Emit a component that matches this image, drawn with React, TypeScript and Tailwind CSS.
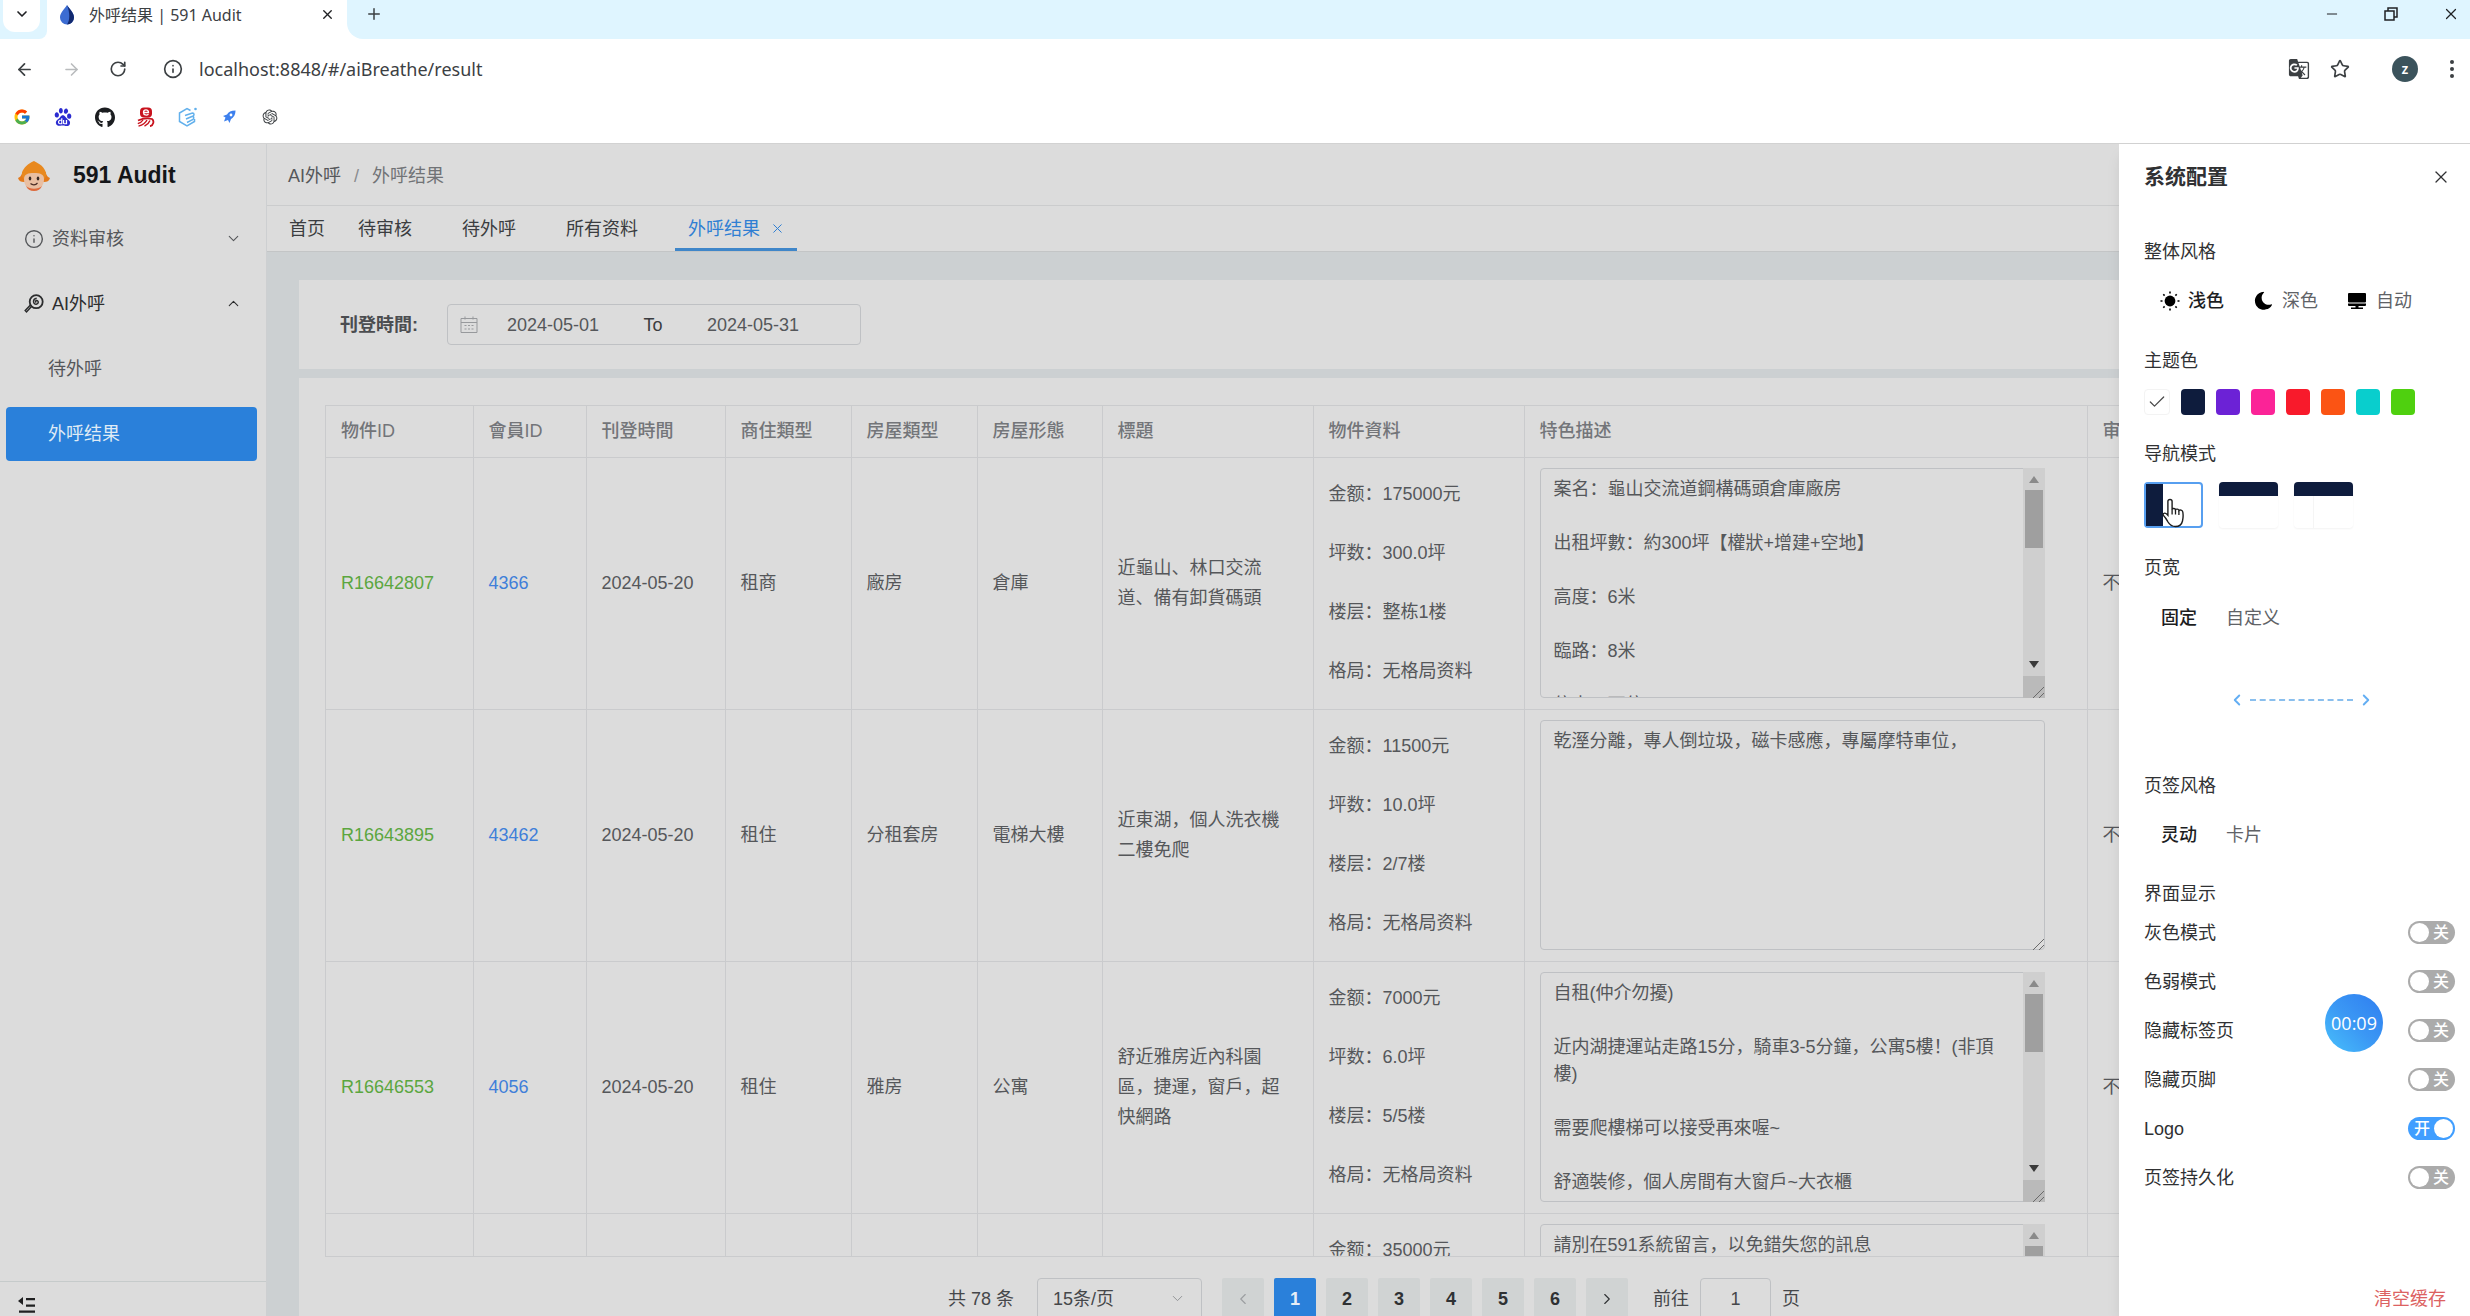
import { useState } from "react";
import clsx from "clsx";
import {
  ArrowLeft,
  ArrowRight,
  Check,
  ChevronDown,
  ChevronLeft,
  ChevronRight,
  ChevronUp,
  Info,
  Minus,
  Plus,
  RotateCw,
  Star,
  X,
} from "lucide-react";
import { FaGithub, FaMoon } from "react-icons/fa";
import { FcGoogle } from "react-icons/fc";
import { MdGTranslate } from "react-icons/md";
import { RiOpenaiFill } from "react-icons/ri";
import { SiBaidu } from "react-icons/si";

/* ---------------------------------- data --------------------------------- */

const tabs = ["首页", "待审核", "待外呼", "所有资料", "外呼结果"];

const columns = [
  "物件ID",
  "會員ID",
  "刊登時間",
  "商住類型",
  "房屋類型",
  "房屋形態",
  "標題",
  "物件資料",
  "特色描述",
  "审核",
];

interface Listing {
  id: string;
  member: string;
  date: string;
  usage: string;
  kind: string;
  shape: string;
  title: string;
  info: string[];
  description: string;
  scroll?: boolean;
}

const listings: Listing[] = [
  {
    id: "R16642807",
    member: "4366",
    date: "2024-05-20",
    usage: "租商",
    kind: "廠房",
    shape: "倉庫",
    title: "近龜山、林口交流道、備有卸貨碼頭",
    info: ["金额：175000元", "坪数：300.0坪", "楼层：整栋1楼", "格局：无格局资料"],
    description:
      "案名：龜山交流道鋼構碼頭倉庫廠房\n\n出租坪數：約300坪【權狀+增建+空地】\n\n高度：6米\n\n臨路：8米\n\n停車：可停",
    scroll: true,
  },
  {
    id: "R16643895",
    member: "43462",
    date: "2024-05-20",
    usage: "租住",
    kind: "分租套房",
    shape: "電梯大樓",
    title: "近東湖，個人洗衣機二樓免爬",
    info: ["金额：11500元", "坪数：10.0坪", "楼层：2/7楼", "格局：无格局资料"],
    description: "乾溼分離，專人倒垃圾，磁卡感應，專屬摩特車位，",
  },
  {
    id: "R16646553",
    member: "4056",
    date: "2024-05-20",
    usage: "租住",
    kind: "雅房",
    shape: "公寓",
    title: "舒近雅房近內科園區，捷運，窗戶，超快網路",
    info: ["金额：7000元", "坪数：6.0坪", "楼层：5/5楼", "格局：无格局资料"],
    description:
      "自租(仲介勿擾)\n\n近内湖捷運站走路15分，騎車3-5分鐘，公寓5樓！(非頂樓)\n\n需要爬樓梯可以接受再來喔~\n\n舒適裝修，個人房間有大窗戶~大衣櫃",
    scroll: true,
  },
  {
    id: "",
    member: "",
    date: "",
    usage: "",
    kind: "",
    shape: "",
    title: "",
    info: ["金额：35000元", "", "", ""],
    description: "請別在591系統留言，以免錯失您的訊息",
    scroll: true,
  },
];

const themeColors = [
  "bg-[#0e1c3d]",
  "bg-[#6c22d6]",
  "bg-[#fb2397]",
  "bg-[#f81a2b]",
  "bg-[#fb5414]",
  "bg-[#09cecd]",
  "bg-[#4fd00f]",
];

const displayOptions = [
  { label: "灰色模式", on: false },
  { label: "色弱模式", on: false },
  { label: "隐藏标签页", on: false },
  { label: "隐藏页脚", on: false },
  { label: "Logo", on: true },
  { label: "页签持久化", on: false },
];

/* ---------------------------------- icons -------------------------------- */

function DropIcon() {
  return (
    <svg width="16" height="20" viewBox="0 0 16 20" aria-hidden="true">
      <path d="M8 0c3 4.500 7 8 7 12.500A7 7 0 0 1 1 12.500C1 8 5 4.500 8 0z" fill="#3c6cd2" />
      <path d="M8 0c3 4.500 7 8 7 12.500A7 7 0 0 1 8 19.500c3-4 3-12 0-19.500z" fill="#12296f" />
    </svg>
  );
}

function SealIcon() {
  return (
    <svg width="18" height="20" viewBox="0 0 18 20" fill="none" stroke="#c8121d" aria-hidden="true">
      <rect x="3" y="0.500" width="12" height="10" rx="4" fill="#c8121d" stroke="none" />
      <path d="M6.500 5.500h5c0-3.500-5-3.500-5 0 0 3 3.500 3 5 1.700" stroke="#fff" strokeWidth="1.300" />
      <path d="M1 13.500c4-1.800 10-2.500 14-1.500 2.500 2 1.500 6.500-2 7.200" strokeWidth="1.800" />
      <path d="M6 13c-1 1.700-3 3-5.200 3.700M10 13c-1.500 3-4.500 5-8.500 6.200M13 13.500c-1 2.500-3 4.500-5.500 5.700" strokeWidth="1.400" />
    </svg>
  );
}

function HexIcon() {
  return (
    <svg width="20" height="20" viewBox="0 0 20 20" fill="none" stroke="#62b0ec" aria-hidden="true">
      <path d="M12.500 3.500 9 1.500 1.500 6v8.500L9 19l7.500-4.500V12" strokeWidth="1.500" />
      <path d="M7 8.500 14.500 6c2 0 2 2.700 0 3.200L8 12M14.500 9.500c2 .5 1.500 2.500 0 3.200L9 15.500" strokeWidth="1.500" />
      <circle cx="17.500" cy="2" r="1.300" fill="#62b0ec" stroke="none" />
    </svg>
  );
}

function RocketIcon() {
  return (
    <svg width="14" height="14" viewBox="0 0 14 14" aria-hidden="true">
      <path d="M13.500.5C9 .5 6.500 2 5 4.500L1 6l2.500 1.500-1.500 4 4-1.500L7.500 13 9 9c2.500-1.500 4.500-4 4.500-8.500z" fill="#3d80ee" />
      <circle cx="9" cy="5" r="1.400" fill="#fff" />
    </svg>
  );
}

function LogoIcon() {
  return (
    <svg width="32" height="30" viewBox="0 0 32 30" aria-hidden="true">
      <path d="M0 17c3-1 3-3 5-6h22c2 3 2 5 5 6-1 3-3 4-6 4H6c-3 0-5-1-6-4z" fill="#e37a1b" />
      <path d="M16 0c3 2 9 3.500 12 11.500.5 3-.5 5-2 7H6c-1.500-2-2.500-4-2-7C5.500 7 10 2.500 16 0z" fill="#e8891f" />
      <path d="M6 18c0-5 4-6 10-6s10 1 10 6c0 7-4 10.500-10 10.500S6 25 6 18z" fill="#e9bfa2" />
      <path d="M8 25c4 3.500 12 3.500 16 0-1.500 3.500-4 5-8 5s-6.500-1.500-8-5z" fill="#dd6a3c" />
      <ellipse cx="12" cy="17.500" rx="1.300" ry="1.900" fill="#3b2b26" />
      <ellipse cx="20" cy="17.500" rx="1.300" ry="1.900" fill="#3b2b26" />
      <path d="M12.500 22.500c2 1.800 5 1.800 7-.5" stroke="#4a2d25" strokeWidth="1.200" fill="none" />
    </svg>
  );
}

function LollipopIcon() {
  return (
    <svg width="20" height="20" viewBox="0 0 20 20" fill="none" stroke="#2c2d2e" aria-hidden="true">
      <circle cx="12.200" cy="7.700" r="6.500" strokeWidth="1.800" />
      <path d="M12.300 8.300c-1-.2-.9-1.700.4-1.700 2 0 2.300 3.300-.4 3.600-3.500.2-4-5.300.4-6" strokeWidth="1.500" />
      <path d="m7.500 12.500-5 5.500-1.300-1.400 5-5.300" strokeWidth="1.500" />
    </svg>
  );
}

function CalendarIcon() {
  return (
    <svg width="18" height="18" viewBox="0 0 18 18" fill="none" stroke="#97999c" aria-hidden="true">
      <path d="M1 2.500h16v14H1zM1 6.500h16M5 .5v3M13 .5v3" />
      <path d="M4.500 9.500h2m1.500 0h2m1.500 0h2m-9 3.500h2m1.500 0h2m1.500 0h2" />
    </svg>
  );
}

function SunIcon() {
  return (
    <svg width="20" height="20" viewBox="0 0 20 20" aria-hidden="true">
      <circle cx="10" cy="10" r="5.400" />
      <path
        d="M10 .5v2M10 17.500v2M.5 10h2M17.500 10h2M3.300 3.300l1.300 1.300M15.400 15.400l1.300 1.300M3.300 16.700l1.300-1.300M15.400 4.600l1.300-1.300"
        stroke="#000"
        strokeWidth="1.600"
      />
    </svg>
  );
}

function MonitorIcon() {
  return (
    <svg width="18" height="18" viewBox="0 0 18 18" aria-hidden="true">
      <rect width="18" height="9.500" y="1" rx="1" />
      <path d="M0 11.500h18v1.500a1 1 0 0 1-1 1h-6.500v1.500H15V17H3v-1.500h4.500V14H1a1 1 0 0 1-1-1z" />
    </svg>
  );
}

function FoldIcon() {
  return (
    <svg width="18" height="18" viewBox="0 0 18 18" fill="#1f2021" aria-hidden="true">
      <path d="M5 1v8L0 5zM8 2h9v2.200H8zM8 8.500h9v2.200H8zM1 14.500h16v2.200H1z" />
    </svg>
  );
}

function HandCursor() {
  return (
    <svg width="24" height="30" viewBox="0 0 24 30" aria-hidden="true">
      <path
        d="M8 1.500c1.300 0 2.100.8 2.100 2v7.700c.4-1 3.200-1 3.400.5.600-1 3.200-.7 3.400.8.900-1 3.700-.5 3.900 1.500.5 3 .4 6-.3 9-.8 3.500-2.500 5.500-7 5.500-4 0-6-2-7.500-4.500-1.300-2.300-2.500-4.500-4.500-6.500-1.300-1.500.8-3 2.400-2 .8.500 1.400 1 2 1.700V3.500c0-1.200.8-2 2.100-2z"
        fill="#fff"
        stroke="#1d1d1d"
        strokeWidth="1.400"
      />
      <path d="M10.100 11v5.500M13.500 12v4.500M16.900 13v4" stroke="#1d1d1d" strokeWidth="1.300" />
    </svg>
  );
}

/* -------------------------------- browser -------------------------------- */

function BrowserChrome() {
  return (
    <header className="shrink-0 pb-2 bg-white text-[#3c4043] font-['Noto_Sans','Noto_Sans_CJK_SC',sans-serif]">
      <div className="flex h-[39px]">
        <div className="w-[47px] pl-[3px] bg-[#dff5ff] rounded-br-lg">
          <button
            type="button"
            aria-label="搜索标签页"
            className="flex items-center justify-center w-[37px] h-8 pb-1 bg-white rounded-b-xl text-[#202124]"
          >
            <ChevronDown size={16} strokeWidth={2.500} />
          </button>
        </div>
        <div className="flex items-center w-[300px] h-[29px] pl-3 pr-3">
          <DropIcon />
          <span className="flex-1 pl-[14px] text-base whitespace-nowrap">外呼结果 | 591 Audit</span>
          <button type="button" aria-label="关闭标签页" className="text-[#202124]">
            <X size={15} strokeWidth={2.200} />
          </button>
        </div>
        <div className="flex flex-1 justify-between bg-[#dff5ff] rounded-bl-2xl pl-[18px] pr-[10px] pb-[11px]">
          <button type="button" aria-label="新标签页">
            <Plus size={18} strokeWidth={2} />
          </button>
          <div className="flex items-center gap-11 text-[#202124]">
            <button type="button" aria-label="最小化">
              <Minus size={16} strokeWidth={1.500} />
            </button>
            <button type="button" aria-label="还原">
              <svg width="14" height="14" viewBox="0 0 14 14" fill="none" stroke="currentColor" strokeWidth="1.500">
                <path d="M1 4h9v9H1zM4 4V1h9v9h-3" />
              </svg>
            </button>
            <button type="button" aria-label="关闭">
              <X size={18} strokeWidth={1.600} />
            </button>
          </div>
        </div>
      </div>

      <div className="flex items-center h-[60px] pl-[15px] pr-2">
        <div className="flex items-center gap-7">
          <button type="button" aria-label="后退">
            <ArrowLeft size={19} strokeWidth={2.200} />
          </button>
          <button type="button" aria-label="前进" className="text-[#b9bbbd]">
            <ArrowRight size={19} strokeWidth={2} />
          </button>
          <button type="button" aria-label="重新加载">
            <RotateCw size={18} strokeWidth={2.200} />
          </button>
        </div>
        <Info size={20} className="ml-9 text-[#3c4043]" />
        <input
          aria-label="地址"
          defaultValue="localhost:8848/#/aiBreathe/result"
          className="flex-1 ml-4 text-lg outline-none"
        />
        <div className="flex items-center">
          <button type="button" aria-label="翻译此页">
            <MdGTranslate size={22} />
          </button>
          <button type="button" aria-label="收藏" className="ml-5">
            <Star size={20} strokeWidth={2} />
          </button>
          <button
            type="button"
            aria-label="账号"
            className="flex items-center justify-center w-[26px] h-[26px] ml-[42px] rounded-full bg-[#3b535c] text-white text-sm font-semibold"
          >
            z
          </button>
          <button type="button" aria-label="更多" className="ml-6">
            <svg width="20" height="20" viewBox="0 0 20 20" fill="currentColor">
              <circle cx="10" cy="3" r="2" />
              <circle cx="10" cy="10" r="2" />
              <circle cx="10" cy="17" r="2" />
            </svg>
          </button>
        </div>
      </div>

      <nav aria-label="书签" className="flex items-center h-9 pl-3">
        <a href="#google" aria-label="Google" className="flex justify-center w-5">
          <FcGoogle size={18} />
        </a>
        <a href="#baidu" aria-label="百度" className="flex justify-center w-5 ml-[21px] text-[#2b2bd0]">
          <SiBaidu size={18} />
        </a>
        <a href="#github" aria-label="GitHub" className="flex justify-center w-5 ml-[22px] text-[#1b1d20]">
          <FaGithub size={21} />
        </a>
        <a href="#yi" aria-label="易" className="flex justify-center w-5 ml-[21px]">
          <SealIcon />
        </a>
        <a href="#hex" aria-label="组件库" className="flex justify-center w-5 ml-[22px]">
          <HexIcon />
        </a>
        <a href="#rocket" aria-label="Rocket" className="flex justify-center w-5 ml-[21px]">
          <RocketIcon />
        </a>
        <a href="#openai" aria-label="OpenAI" className="flex justify-center w-5 ml-[21px] text-[#3c4043]">
          <RiOpenaiFill size={18} />
        </a>
      </nav>
    </header>
  );
}

/* -------------------------------- sidebar -------------------------------- */

function Sidebar() {
  return (
    <aside className="flex flex-col shrink-0 w-[267px] border-r border-[#cdcfd1] bg-[#dcdcdc]">
      <div className="flex items-center h-[62px] pt-[2px] pl-[18px] gap-[23px]">
        <LogoIcon />
        <h1 className="text-[23px] font-bold text-[#141619]">591 Audit</h1>
      </div>
      <nav className="flex-1 text-[#55575a]">
        <button type="button" className="flex items-center w-full h-[65px] pl-6 pr-6">
          <Info size={20} strokeWidth={1.700} />
          <span className="flex-1 pl-2 text-left">资料审核</span>
          <ChevronDown size={17} strokeWidth={1.500} />
        </button>
        <button type="button" className="flex items-center w-full h-[65px] pl-6 pr-6 text-[#2c2d2e]">
          <LollipopIcon />
          <span className="flex-1 pl-2 text-left">AI外呼</span>
          <ChevronUp size={17} strokeWidth={1.500} />
        </button>
        <a href="#pending" className="flex items-center h-[65px] pl-12">
          待外呼
        </a>
        <div className="flex items-center h-[65px] pl-[6px] pr-[9px]">
          <a href="#result" className="flex items-center w-full h-[54px] pl-[42px] rounded bg-[#2a80da] text-[#dfeaf5]">
            外呼结果
          </a>
        </div>
      </nav>
      <div className="h-[35px] pt-[14px] pl-[18px] border-t border-[#c6cbcb]">
        <button type="button" aria-label="收起菜单" className="block">
          <FoldIcon />
        </button>
      </div>
    </aside>
  );
}

/* ---------------------------------- page --------------------------------- */

function TopBar() {
  return (
    <div className="shrink-0 bg-[#dcdcdc]">
      <div className="flex items-center h-[62px] pt-[2px] pl-[21px] gap-[13px] border-b border-[#cbcccd] text-[#55575a]">
        <a href="#ai">AI外呼</a>
        <span className="text-[#8a8c8f]">/</span>
        <span className="text-[#717376]">外呼结果</span>
      </div>
      <div className="flex h-[46px] pl-[9px] border-b border-[#c3c5c6] text-[#3b3d40]">
        {tabs.map((tab, i) => {
          const active = i === tabs.length - 1;
          return (
            <a
              key={tab}
              href={`#tab-${i}`}
              className={clsx(
                "flex items-center pl-[13px] whitespace-nowrap",
                i === 0 ? "pr-5" : active ? "pr-3" : "pr-[37px]",
                active && "border-b-3 pt-[3px] border-[#3f86c9] text-[#2f7fd3]"
              )}
            >
              {tab}
              {active && <X size={15} strokeWidth={1.600} className="ml-[10px]" />}
            </a>
          );
        })}
      </div>
    </div>
  );
}

function FilterCard() {
  return (
    <form className="flex items-center shrink-0 h-[89px] pl-[41px] bg-[#dcdcdc]">
      <label htmlFor="from" className="w-[107px] font-bold text-[#4b4d50]">
        刊登時間:
      </label>
      <div className="flex items-center w-[414px] h-[41px] pl-3 border border-[#bfc1c4] rounded text-[#55575a]">
        <CalendarIcon />
        <input id="from" defaultValue="2024-05-01" className="w-[150px] text-center outline-none" />
        <span className="w-[50px] text-center text-[#3b3d40]">To</span>
        <input aria-label="结束日期" defaultValue="2024-05-31" className="w-[150px] text-center outline-none" />
      </div>
    </form>
  );
}

function Description({ text, scroll }: { text: string; scroll?: boolean }) {
  return (
    <div className="relative w-[505px] h-[230px]">
      <textarea
        aria-label="特色描述"
        defaultValue={text}
        className={clsx(
          "block w-full h-full pt-[7px] pl-[13px] border border-[#bfc1c4] rounded leading-[27px] resize-none overflow-hidden outline-none",
          scroll ? "pr-[34px]" : "pr-[13px]"
        )}
      />
      {scroll && (
        <div className="absolute inset-y-0 right-0 flex flex-col items-center w-[22px] bg-[#cfcfcf]">
          <div className="flex items-center justify-center w-full h-[22px] text-[#8a8a8a]">
            <svg width="10" height="7" viewBox="0 0 10 7" fill="currentColor">
              <path d="m5 0 5 7H0z" />
            </svg>
          </div>
          <div className="w-[18px] h-[58px] bg-[#9f9f9f]" />
          <div className="flex flex-1 items-end justify-center w-full pb-2 text-[#3a3a3a]">
            <svg width="10" height="7" viewBox="0 0 10 7" fill="currentColor">
              <path d="m5 7 5-7H0z" />
            </svg>
          </div>
          <div className="w-full h-[22px] bg-[#bababa]" />
        </div>
      )}
      <svg width="12" height="12" viewBox="0 0 12 12" stroke="#6a6a6a" className="absolute bottom-0 right-0">
        <path d="M0 12 11 1M6 12l5-5" />
      </svg>
    </div>
  );
}

function ListingTable() {
  return (
    <div className="flex-1 min-h-0 overflow-hidden border-b border-l border-t border-[#cacbcd]">
      <table className="w-full table-fixed border-collapse text-left text-[#55575a]">
        <colgroup>
          <col className="w-[147px]" />
          <col className="w-[113px]" />
          <col className="w-[139px]" />
          <col className="w-[126px]" />
          <col className="w-[126px]" />
          <col className="w-[125px]" />
          <col className="w-[211px]" />
          <col className="w-[211px]" />
          <col className="w-[563px]" />
          <col />
        </colgroup>
        <thead>
          <tr className="h-[51px] border-b border-[#cacbcd]">
            {columns.map((name) => (
              <th key={name} className="pl-[15px] border-r border-[#cacbcd] font-medium text-[#737579]">
                {name}
              </th>
            ))}
          </tr>
        </thead>
        <tbody>
          {listings.map((row, i) => (
            <tr key={i} className="h-[252px] border-b border-[#cacbcd] [&>td]:border-r [&>td]:border-[#cacbcd] [&>td]:pl-[15px]">
              <td>
                <a href={`#${row.id}`} className="text-[#5ba63f]">
                  {row.id}
                </a>
              </td>
              <td>
                <a href={`#${row.member}`} className="text-[#3f7fd9]">
                  {row.member}
                </a>
              </td>
              <td>{row.date}</td>
              <td>{row.usage}</td>
              <td>{row.kind}</td>
              <td>{row.shape}</td>
              <td className="pr-[30px] leading-[30px]">{row.title}</td>
              <td>
                {row.info.map((line, n) => (
                  <p key={n} className="h-[59px] leading-[59px] whitespace-nowrap">
                    {line}
                  </p>
                ))}
              </td>
              <td>
                <Description text={row.description} scroll={row.scroll} />
              </td>
              <td className="whitespace-nowrap">{row.id && "不符"}</td>
            </tr>
          ))}
        </tbody>
      </table>
    </div>
  );
}

function Pagination() {
  const [page, setPage] = useState(1);

  return (
    <div className="flex items-start shrink-0 h-[59px] pt-[21px] pl-[623px] text-[#45474a]">
      <div className="flex items-center h-[42px]">
        <span className="w-[89px] whitespace-nowrap">共 78 条</span>
        <div className="relative">
          <select
            aria-label="每页条数"
            className="block w-[165px] h-[42px] pl-[15px] border border-[#bfc1c4] rounded appearance-none bg-[#dcdcdc]"
          >
            <option>15条/页</option>
          </select>
          <ChevronDown size={17} strokeWidth={1.300} className="absolute right-4 top-3 text-[#8d8f92]" />
        </div>
        <div className="flex gap-[10px] ml-5 font-bold">
          <button
            type="button"
            aria-label="上一页"
            className="flex items-center justify-center w-[42px] h-[42px] rounded-xs bg-[#d0d3d3] text-[#9b9da0]"
          >
            <ChevronLeft size={18} strokeWidth={1.500} />
          </button>
          {[1, 2, 3, 4, 5, 6].map((n) => (
            <button
              key={n}
              type="button"
              onClick={() => setPage(n)}
              className={clsx(
                "w-[42px] h-[42px] rounded-xs",
                page === n ? "bg-[#2a80da] text-[#e6eef7]" : "bg-[#d0d3d3] text-[#2f3133]"
              )}
            >
              {n}
            </button>
          ))}
          <button
            type="button"
            aria-label="下一页"
            className="flex items-center justify-center w-[42px] h-[42px] rounded-xs bg-[#d0d3d3] text-[#2f3133]"
          >
            <ChevronRight size={18} strokeWidth={1.500} />
          </button>
        </div>
        <label htmlFor="jump" className="ml-[25px] whitespace-nowrap">
          前往
        </label>
        <input
          id="jump"
          defaultValue="1"
          className="w-[71px] h-[42px] mx-[11px] border border-[#bfc1c4] rounded text-center outline-none"
        />
        <span>页</span>
      </div>
    </div>
  );
}

/* --------------------------------- drawer -------------------------------- */

function Switch({ label, on }: { label: string; on: boolean }) {
  const [checked, setChecked] = useState(on);

  return (
    <label className="flex items-center justify-between h-[49px]">
      {label}
      <input
        type="checkbox"
        checked={checked}
        onChange={() => setChecked(!checked)}
        className="sr-only"
      />
      <span
        className={clsx(
          "flex items-center justify-between w-[47px] h-[23px] px-[2px] rounded-full text-base font-medium text-white",
          checked ? "bg-[#409eff] flex-row-reverse" : "bg-[#ababab]"
        )}
      >
        <span className="w-[21px] h-[19px] rounded-full bg-white" />
        <span className="px-1 leading-none">{checked ? "开" : "关"}</span>
      </span>
    </label>
  );
}

function SettingsDrawer() {
  return (
    <aside className="absolute inset-y-0 right-0 flex flex-col w-[351px] pl-[25px] pr-[15px] bg-white text-[#303133] shadow-lg">
      <div className="flex items-center justify-between h-[66px] pr-1">
        <h2 className="text-[21px] font-bold">系统配置</h2>
        <button type="button" aria-label="关闭">
          <X size={20} strokeWidth={1.500} />
        </button>
      </div>

      <h3 className="h-[27px] mt-[29px] leading-[27px]">整体风格</h3>
      <div className="flex items-center h-[42px] mt-[14px] pl-4 gap-[30px] text-[#606266]">
        <button type="button" className="flex items-center gap-2 font-medium text-[#1d1e1f]">
          <SunIcon />
          浅色
        </button>
        <button type="button" className="flex items-center gap-[10px]">
          <FaMoon size={18} color="#000" className="-rotate-12" />
          深色
        </button>
        <button type="button" className="flex items-center gap-[10px]">
          <MonitorIcon />
          自动
        </button>
      </div>

      <h3 className="h-[27px] mt-[26px] leading-[27px]">主题色</h3>
      <div className="flex gap-[11px] mt-[14px]">
        <button
          type="button"
          aria-label="白色主题"
          className="flex items-center justify-center w-[26px] h-[26px] border border-[#f3f3f3] rounded text-[#4a4a4a]"
        >
          <Check size={20} strokeWidth={1.500} className="shrink-0" />
        </button>
        {themeColors.map((color) => (
          <button key={color} type="button" aria-label="主题色" className={clsx("w-6 h-[26px] rounded", color)} />
        ))}
      </div>

      <h3 className="h-[27px] mt-[26px] leading-[27px]">导航模式</h3>
      <div className="flex gap-4 mt-[14px]">
        <button
          type="button"
          aria-label="左侧菜单"
          className="relative flex w-[59px] h-[46px] border-2 border-[#579ff0] rounded"
        >
          <span className="w-[17px] h-full bg-[#0e1c3d]" />
          <span className="absolute left-4 top-[14px]">
            <HandCursor />
          </span>
        </button>
        <button type="button" aria-label="顶部菜单" className="w-[59px] h-[46px] rounded shadow-xs overflow-hidden">
          <span className="block h-[14px] mb-8 bg-[#0e1c3d]" />
        </button>
        <button type="button" aria-label="混合菜单" className="w-[59px] h-[46px] rounded shadow-xs overflow-hidden">
          <span className="block h-[14px] bg-[#0e1c3d]" />
          <span className="block w-5 h-8 border-r border-[#f5f5f5]" />
        </button>
      </div>

      <h3 className="h-[27px] mt-[27px] leading-[27px]">页宽</h3>
      <div className="flex items-center h-[42px] mt-[15px] pl-[17px] gap-[29px] text-[#606266]">
        <button type="button" className="font-medium text-[#1d1e1f]">
          固定
        </button>
        <button type="button">自定义</button>
      </div>
      <div className="flex items-center justify-center h-[122px] pl-1 gap-1 text-[#63aef3]">
        <ChevronLeft size={18} strokeWidth={2.500} />
        <span className="w-[103px] border-t-2 border-dashed border-[#8abfee]" />
        <ChevronRight size={18} strokeWidth={2.500} />
      </div>

      <h3 className="h-[27px] mt-[12px] leading-[27px]">页签风格</h3>
      <div className="flex items-center h-[42px] mt-[14px] pl-[17px] gap-[29px] text-[#606266]">
        <button type="button" className="font-medium text-[#1d1e1f]">
          灵动
        </button>
        <button type="button">卡片</button>
      </div>

      <h3 className="h-[27px] mt-[25px] leading-[27px]">界面显示</h3>
      {displayOptions.map((option) => (
        <Switch key={option.label} label={option.label} on={option.on} />
      ))}

      <div className="flex justify-end mt-[84px] pr-[9px]">
        <button type="button" className="leading-[27px] text-[#dc6262]">
          清空缓存
        </button>
      </div>

      {/* floating recording timer */}
      <div className="absolute top-[850px] right-[87px] flex items-center justify-center w-[58px] h-[58px] rounded-full bg-linear-to-bl from-[#2f7df0] via-[#3b97f4] to-[#49c0fb] font-['Open_Sans',sans-serif] text-lg text-white">
        00:09
      </div>
    </aside>
  );
}

export default function App() {
  return (
    <div className="flex flex-col h-screen overflow-hidden text-lg font-['Liberation_Sans','Noto_Sans_CJK_SC',sans-serif]">
      <BrowserChrome />
      <div className="relative flex flex-1 min-h-0 border-t border-[#d2d2d2]">
        <Sidebar />
        <main className="flex flex-col flex-1 min-w-0 bg-[#ccd0d2]">
          <TopBar />
          <div className="flex flex-col flex-1 min-h-0 gap-[9px] pt-7 pl-8">
            <FilterCard />
            <section className="flex flex-col flex-1 min-h-0 pt-[27px] pl-[26px] bg-[#dcdcdc]">
              <ListingTable />
              <Pagination />
            </section>
          </div>
        </main>
        <SettingsDrawer />
      </div>
    </div>
  );
}
